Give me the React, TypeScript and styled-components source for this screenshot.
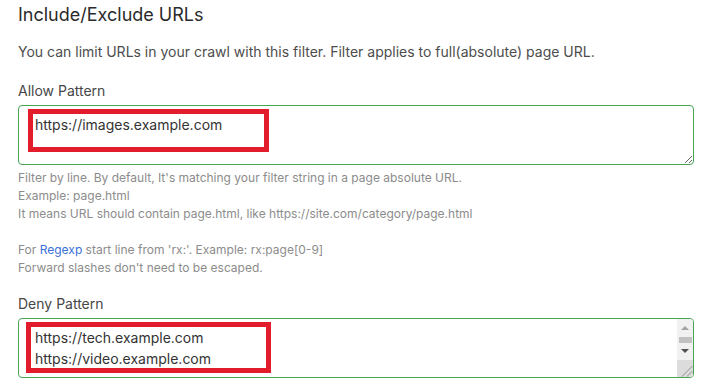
import React from "react";
import styled, { createGlobalStyle } from "styled-components";

const Global = createGlobalStyle`
  html, body { margin: 0; padding: 0; background: #fff; }
  body { font-family: Inter, "Noto Sans", sans-serif; color: #333; }
  * { box-sizing: border-box; }
`;

const Page = styled.div`
  padding: 4px 18px 0 18px;
  width: 712px;
`;

const Title = styled.h2`
  margin: 0;
  font-size: 18px;
  line-height: 22px;
  font-weight: 400;
  color: #2b2b2b;
`;

const Desc = styled.p`
  margin: 16px 0 0;
  font-size: 14px;
  line-height: 20px;
  color: #4d4d4d;
`;

const Label = styled.label<{ $top: number }>`
  display: block;
  margin-top: ${(p) => p.$top}px;
  font-size: 14px;
  line-height: 20px;
  color: #474747;
`;

const Field = styled.div<{ $gap: number }>`
  position: relative;
  margin-top: ${(p) => p.$gap}px;
  width: 676px;
`;

const Area = styled.textarea<{ $fixed?: boolean }>`
  display: block;
  width: 100%;
  height: 60px;
  padding: 8px 16px;
  border: 1px solid #45a552;
  border-radius: 4px;
  font-family: Inter, "Noto Sans", sans-serif;
  font-size: 14px;
  line-height: 21px;
  color: #333;
  outline: none;
  resize: ${(p) => (p.$fixed ? "none" : "vertical")};
  overflow: hidden;
`;

const Mark = styled.div<{ $l: number; $t: number; $w: number; $h: number }>`
  position: absolute;
  left: ${(p) => p.$l}px;
  top: ${(p) => p.$t}px;
  width: ${(p) => p.$w}px;
  height: ${(p) => p.$h}px;
  border: 5px solid #e31c2b;
  pointer-events: none;
`;

const Scrollbar = styled.div`
  position: absolute;
  top: 1px;
  right: 1px;
  bottom: 1px;
  width: 16px;
  display: flex;
  flex-direction: column;
  background: #f1f1f1;
  border-top-right-radius: 3px;
  border-bottom-right-radius: 3px;
  overflow: hidden;
`;

const ArrowBtn = styled.div<{ $h: number }>`
  height: ${(p) => p.$h}px;
  flex: none;
  display: flex;
  svg {
    display: block;
  }
`;

const Track = styled.div`
  flex: 1;
  padding: 2px 1px 0 2px;
`;

const Thumb = styled.div`
  height: 6px;
  background: #c1c1c1;
`;

const Corner = styled.div`
  height: 17px;
  flex: none;
  background: #dcdcdc;
  svg {
    display: block;
  }
`;

const Help = styled.div`
  margin-top: 4px;
  font-size: 12px;
  line-height: 18px;
  color: #8c8c8c;
`;

const Line = styled.div`
  min-height: 18px;
`;

const Link = styled.a`
  color: #3a6fd8;
  text-decoration: none;
`;

export default function App() {
  return (
    <>
      <Global />
      <Page>
        <Title>Include/Exclude URLs</Title>
        <Desc>
          You can limit URLs in your crawl with this filter. Filter applies to full(absolute) page URL.
        </Desc>
        <Label $top={19}>Allow Pattern</Label>
        <Field $gap={4}>
          <Area defaultValue="https://images.example.com" />
          <Mark $l={10} $t={4} $w={241} $h={43} />
        </Field>
        <Help>
          <Line>Filter by line. By default, It's matching your filter string in a page absolute URL.</Line>
          <Line>Example: page.html</Line>
          <Line>It means URL should contain page.html, like https://site.com/category/page.html</Line>
          <Line />
          <Line>
            For <Link href="#">Regexp</Link> start line from 'rx:'. Example: rx:page[0-9]
          </Line>
          <Line>Forward slashes don't need to be escaped.</Line>
        </Help>
        <Label $top={17}>Deny Pattern</Label>
        <Field $gap={4}>
          <Area $fixed defaultValue={"https://tech.example.com\nhttps://video.example.com"} />
          <Scrollbar>
            <ArrowBtn $h={16}>
              <svg width="16" height="16" viewBox="0 0 16 16">
                <polygon points="4,11 12,11 8,7" fill="#a3a3a3" />
              </svg>
            </ArrowBtn>
            <Track>
              <Thumb />
            </Track>
            <ArrowBtn $h={15}>
              <svg width="16" height="15" viewBox="0 0 16 15">
                <polygon points="4,4 12,4 8,8" fill="#505050" />
              </svg>
            </ArrowBtn>
            <Corner>
              <svg width="16" height="17" viewBox="0 0 16 17">
                <line x1="5" y1="16.5" x2="15.5" y2="6" stroke="#8f8f8f" strokeWidth="1" />
                <line x1="10" y1="16.5" x2="15.5" y2="11" stroke="#8f8f8f" strokeWidth="1" />
              </svg>
            </Corner>
          </Scrollbar>
          <Mark $l={8} $t={4} $w={245} $h={51} />
        </Field>
      </Page>
    </>
  );
}
